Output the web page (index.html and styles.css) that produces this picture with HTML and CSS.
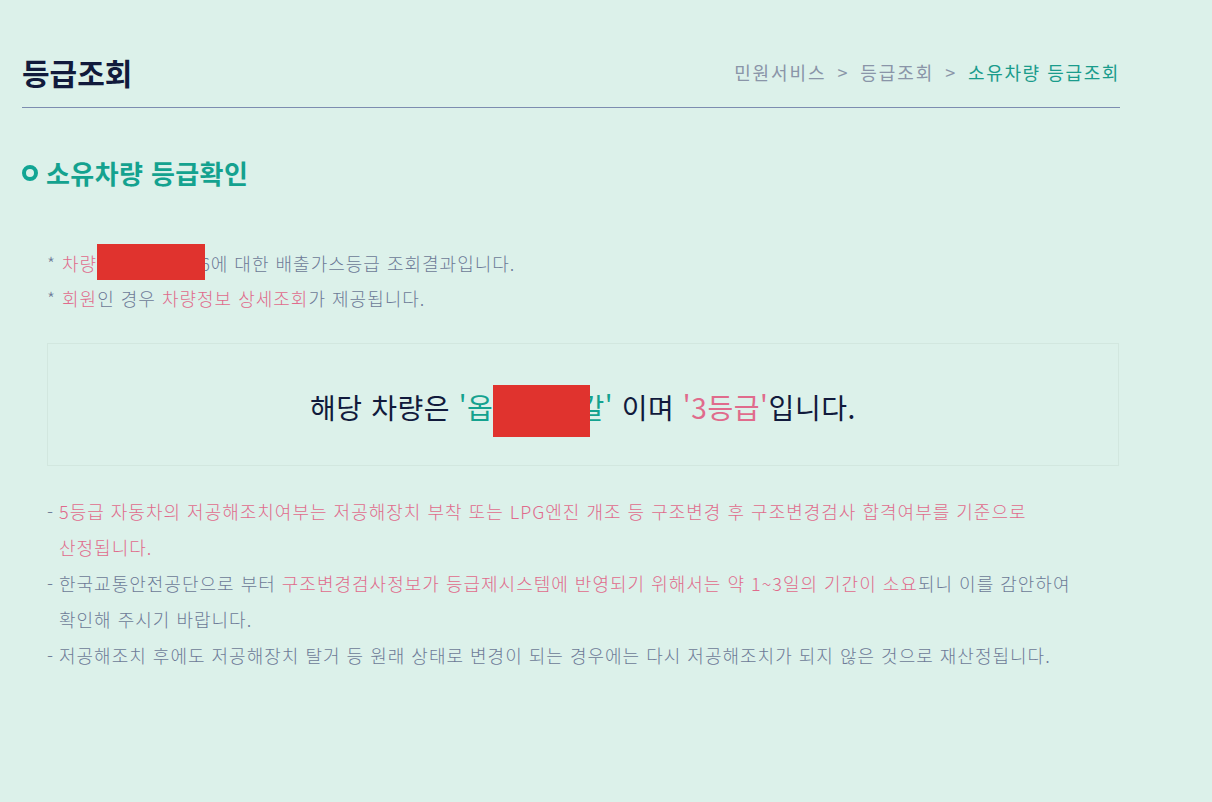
FILE: index.html
```html
<!DOCTYPE html>
<html lang="ko">
<head>
<meta charset="utf-8">
<title>등급조회</title>
<link rel="stylesheet" href="styles.css">
</head>
<body>
<div class="page">
  <div class="header">
    <h1 class="title">등급조회</h1>
    <div class="breadcrumb">
      <span>민원서비스</span><span class="sep">&gt;</span><span>등급조회</span><span class="sep">&gt;</span><span class="current">소유차량 등급조회</span>
    </div>
  </div>

  <h2 class="section-title"><span class="ring"></span>소유차량 등급확인</h2>

  <div class="notes">
    <p class="note">* <span class="pink">차량</span><span class="redact redact-sm"></span>6에 대한 배출가스등급 조회결과입니다.</p>
    <p class="note">* <span class="pink">회원</span>인 경우 <span class="pink">차량정보 상세조회</span>가 제공됩니다.</p>
  </div>

  <div class="result-box">
    <p class="result">해당 차량은 <span class="teal">'옵<span class="redact redact-lg"></span>갈'</span> 이며 <span class="pink">'3등급'</span>입니다.</p>
  </div>

  <ul class="bullets">
    <li><span class="dash">-</span><p class="btext pink">5등급 자동차의 저공해조치여부는 저공해장치 부착 또는 LPG엔진 개조 등 구조변경 후 구조변경검사 합격여부를 기준으로 산정됩니다.</p></li>
    <li><span class="dash">-</span><p class="btext">한국교통안전공단으로 부터 <span class="pink">구조변경검사정보가 등급제시스템에 반영되기 위해서는 약 1~3일의 기간이 소요</span>되니 이를 감안하여 확인해 주시기 바랍니다.</p></li>
    <li><span class="dash">-</span><p class="btext">저공해조치 후에도 저공해장치 탈거 등 원래 상태로 변경이 되는 경우에는 다시 저공해조치가 되지 않은 것으로 재산정됩니다.</p></li>
  </ul>
</div>
</body>
</html>
```

FILE: styles.css
```css
html, body {
  margin: 0;
  padding: 0;
  background: #dcf1ea;
}
body {
  font-family: "Noto Sans CJK KR", "Noto Sans", sans-serif;
  width: 1212px;
  height: 802px;
  overflow: hidden;
}
.page {
  margin-left: 22px;
  width: 1098px;
}
.header {
  display: flex;
  justify-content: space-between;
  align-items: center;
  padding-top: 52px;
  padding-bottom: 15px;
  border-bottom: 1px solid #7d8db0;
}
.title {
  margin: 0;
  font-size: 30px;
  font-weight: 700;
  line-height: 40px;
  color: #111a3c;
}
.breadcrumb {
  font-size: 18px;
  font-weight: 400;
  color: #8a95a8;
  line-height: 28px;
  letter-spacing: 1.9px;
  display: flex;
  gap: 11px;
}
.breadcrumb .current {
  color: #1a9c8c;
  letter-spacing: 1.6px;
}
.section-title {
  margin: 48px 0 0 0;
  display: flex;
  align-items: center;
  gap: 8px;
  font-size: 26px;
  font-weight: 700;
  line-height: 34px;
  letter-spacing: 0.4px;
  color: #14a28f;
}
.ring {
  display: inline-block;
  flex: none;
  width: 8px;
  height: 8px;
  border: 4px solid #12a594;
  border-radius: 50%;
}
.notes {
  margin-top: 56px;
  padding-left: 25px;
}
.note {
  margin: 0;
  font-size: 18px;
  font-weight: 300;
  line-height: 35px;
  letter-spacing: 1px;
  color: #6d7a97;
}
.pink {
  color: #e06b8c;
}
.teal {
  color: #14a28f;
}
.redact {
  display: inline-block;
  background: #e0332e;
  vertical-align: middle;
  position: relative;
  z-index: 1;
}
.redact-sm {
  width: 108px;
  height: 36px;
  margin: -10px -5px -10px 0;
  top: -4px;
}
.redact-lg {
  width: 97px;
  height: 52px;
  margin: -12px -12px -12px 0;
  top: 0;
}
.result-box {
  margin: 27px 0 0 25px;
  width: 1070px;
  height: 121px;
  border: 1px solid #d2e7df;
  display: flex;
  align-items: center;
  justify-content: center;
}
.result {
  margin: 0;
  font-size: 28px;
  font-weight: 400;
  letter-spacing: 0.6px;
  color: #111a3c;
  line-height: 40px;
  position: relative;
  top: 2px;
}
.bullets {
  list-style: none;
  margin: 27px 0 0 25px;
  padding: 0;
  width: 1045px;
}
.bullets li {
  display: flex;
  font-size: 18px;
  font-weight: 300;
  line-height: 36px;
  letter-spacing: 1px;
  color: #6d7a97;
}
.dash {
  flex: none;
  width: 12px;
}
.btext {
  margin: 0;
  flex: 1;
  word-break: keep-all;
}
```
